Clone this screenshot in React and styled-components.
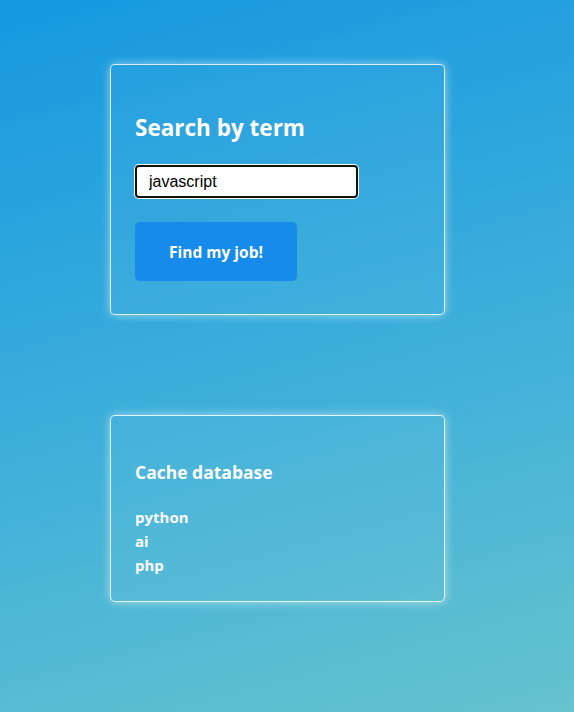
import styled, { createGlobalStyle } from "styled-components";

const GlobalStyle = createGlobalStyle`
    html, body {
        margin: 0;
        padding: 0;
    }
    body {
        min-height: 712px;
        background: linear-gradient(165deg, #1598e0 0%, #3fb0da 55%, #66c3ce 100%);
        font-family: "Open Sans", "Noto Sans", sans-serif;
        color: white;
    }
`;

function App() {
    const cached = ["python", "ai", "php"];

    return (
        <Page>
            <GlobalStyle />
            <Card>
                <Title>Search by term</Title>
                <SearchInput defaultValue="javascript" />
                <FindButton>Find my job!</FindButton>
            </Card>
            <Card $compact>
                <SubTitle>Cache database</SubTitle>
                <TermList>
                    {cached.map((term) => (
                        <Term key={term}>{term}</Term>
                    ))}
                </TermList>
            </Card>
        </Page>
    );
}

const Page = styled.div`
    display: flex;
    flex-direction: column;
    gap: 100px;
    padding: 64px 0 0 110px;
`;

const Card = styled.div`
    display: flex;
    flex-direction: column;
    align-items: flex-start;
    box-sizing: border-box;
    width: 335px;
    height: ${(p) => (p.$compact ? "187px" : "251px")};
    padding: ${(p) => (p.$compact ? "44px 24px 0 24px" : "48px 24px 0 24px")};
    border: 1px solid rgba(255, 255, 255, 0.85);
    border-radius: 5px;
    background: rgba(255, 255, 255, 0.04);
    box-shadow: 0 0 10px rgba(255, 255, 255, 0.55);
`;

const Title = styled.h1`
    margin: 0 0 22px 0;
    font-size: 22.5px;
    font-weight: 700;
    line-height: 30px;
`;

const SearchInput = styled.input`
    box-sizing: border-box;
    width: 223px;
    height: 33px;
    padding: 0 12px;
    border: 2px solid #111;
    border-radius: 4px;
    box-shadow: 0 0 0 1px #fff;
    background: #fff;
    font-family: "Liberation Sans", Arial, sans-serif;
    font-size: 16px;
    color: #000;
    outline: none;
`;

const FindButton = styled.button`
    margin-top: 24px;
    width: 162px;
    height: 59px;
    border: none;
    border-radius: 5px;
    background: #168bea;
    color: white;
    font-family: "Open Sans", "Noto Sans", sans-serif;
    font-size: 15.5px;
    font-weight: 700;
    cursor: pointer;
`;

const SubTitle = styled.h2`
    margin: 0 0 21px 0;
    font-size: 17.5px;
    font-weight: 700;
    line-height: 24px;
`;

const TermList = styled.div`
    display: flex;
    flex-direction: column;
`;

const Term = styled.div`
    font-size: 15px;
    font-weight: 700;
    line-height: 24px;
`;

export default App;
